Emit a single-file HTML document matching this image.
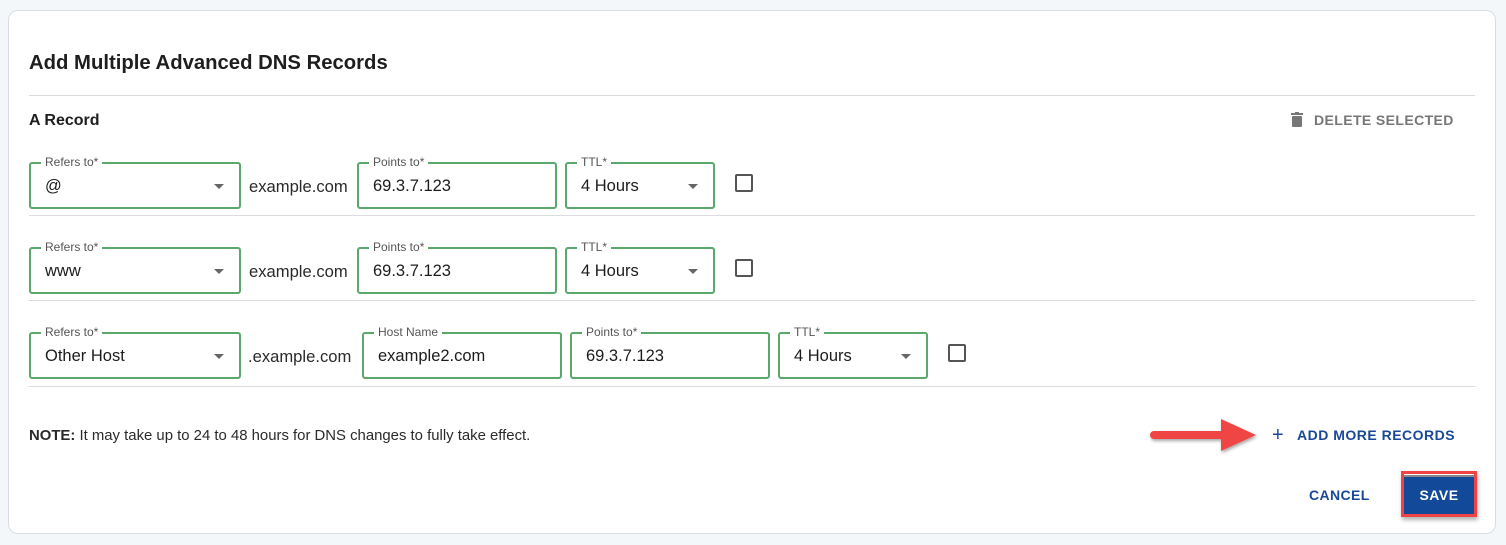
<!DOCTYPE html>
<html><head><style>
body{margin:0;width:1506px;height:545px;background:#f4f7fa;font-family:"Liberation Sans",sans-serif;position:relative;overflow:hidden}
.card{position:absolute;left:8px;top:10px;width:1486px;height:522px;background:#fff;border:1px solid #d9dde3;border-radius:10px}
.a{position:absolute}
.hr{position:absolute;left:29px;width:1446px;height:1px;background:#dcdcdc}
.f{position:absolute;height:47px;border:2px solid #5aa86e;border-radius:3px;box-sizing:border-box}
.f .l{position:absolute;top:-9px;left:10px;background:#fff;padding:0 4px;font-size:12px;color:#555}
.f .v{position:absolute;left:14px;top:13px;font-size:16.5px;color:#1c1c1c}
.f .c{position:absolute;right:15px;top:20px;border-left:5px solid transparent;border-right:5px solid transparent;border-top:5px solid #666}
.t{position:absolute;font-size:16.6px;color:#2a2a2a}
.cb{position:absolute;width:14px;height:14px;border:2px solid #555;border-radius:2px}
</style></head><body>
<div class="card"></div>
<div class="a" style="left:29px;top:52px;font-size:20.3px;font-weight:bold;color:#1e1e1e">Add Multiple Advanced DNS Records</div>
<div class="hr" style="top:95px"></div>
<div class="a" style="left:29px;top:112px;font-size:16px;font-weight:bold;color:#1e1e1e">A Record</div>
<svg class="a" style="left:1291px;top:112px" width="12" height="15" viewBox="0 0 12 15"><rect x="0" y="1" width="12" height="2" fill="#777"/><rect x="4" y="0" width="4" height="2" fill="#777"/><rect x="1" y="4" width="10" height="11" rx="1" fill="#777"/></svg>
<div class="a" style="left:1314px;top:112px;font-size:14px;font-weight:bold;color:#777;letter-spacing:0.4px">DELETE SELECTED</div>

<div class="f" style="left:29px;top:162px;width:212px"><span class="l">Refers to*</span><span class="v">@</span><span class="c"></span></div>
<div class="t" style="left:249px;top:177px">example.com</div>
<div class="f" style="left:357px;top:162px;width:200px"><span class="l">Points to*</span><span class="v">69.3.7.123</span></div>
<div class="f" style="left:565px;top:162px;width:150px"><span class="l">TTL*</span><span class="v">4 Hours</span><span class="c"></span></div>
<div class="cb" style="left:735px;top:174px"></div>
<div class="hr" style="top:215px"></div>

<div class="f" style="left:29px;top:247px;width:212px"><span class="l">Refers to*</span><span class="v">www</span><span class="c"></span></div>
<div class="t" style="left:249px;top:262px">example.com</div>
<div class="f" style="left:357px;top:247px;width:200px"><span class="l">Points to*</span><span class="v">69.3.7.123</span></div>
<div class="f" style="left:565px;top:247px;width:150px"><span class="l">TTL*</span><span class="v">4 Hours</span><span class="c"></span></div>
<div class="cb" style="left:735px;top:259px"></div>
<div class="hr" style="top:300px"></div>

<div class="f" style="left:29px;top:332px;width:212px"><span class="l">Refers to*</span><span class="v">Other Host</span><span class="c"></span></div>
<div class="t" style="left:248px;top:347px">.example.com</div>
<div class="f" style="left:362px;top:332px;width:200px"><span class="l">Host Name</span><span class="v">example2.com</span></div>
<div class="f" style="left:570px;top:332px;width:200px"><span class="l">Points to*</span><span class="v">69.3.7.123</span></div>
<div class="f" style="left:778px;top:332px;width:150px"><span class="l">TTL*</span><span class="v">4 Hours</span><span class="c"></span></div>
<div class="cb" style="left:948px;top:344px"></div>
<div class="hr" style="top:386px"></div>

<div class="a" style="left:29px;top:428px;font-size:14.9px;color:#2a2a2a"><b>NOTE:</b> It may take up to 24 to 48 hours for DNS changes to fully take effect.</div>
<svg class="a" style="left:1146px;top:416px" width="115" height="40" viewBox="0 0 115 40"><defs><filter id="s"><feDropShadow dx="1" dy="2" stdDeviation="1.5" flood-opacity="0.35"/></filter></defs><g filter="url(#s)" fill="#f04444"><rect x="4" y="15" width="75" height="8" rx="4"/><polygon points="75,3 110,19 75,35"/></g></svg>
<div class="a" style="left:1272px;top:424px;font-size:20px;color:#1a4899">+</div>
<div class="a" style="left:1297px;top:427px;font-size:14px;font-weight:bold;color:#1a4899;letter-spacing:0.5px">ADD MORE RECORDS</div>
<div class="a" style="left:1309px;top:487px;font-size:14px;font-weight:bold;color:#1a4899;letter-spacing:0.4px">CANCEL</div>
<div class="a" style="left:1401px;top:471px;width:70px;height:40px;border:3px solid #f04444;box-shadow:1px 3px 4px rgba(0,0,0,.3)"><div style="position:absolute;left:0;top:1px;right:0;bottom:0;background:#124a99;border-top:2px solid #888;color:#fff;font-size:14px;font-weight:bold;text-align:center;line-height:36px;letter-spacing:0.5px">SAVE</div></div>
</body></html>
